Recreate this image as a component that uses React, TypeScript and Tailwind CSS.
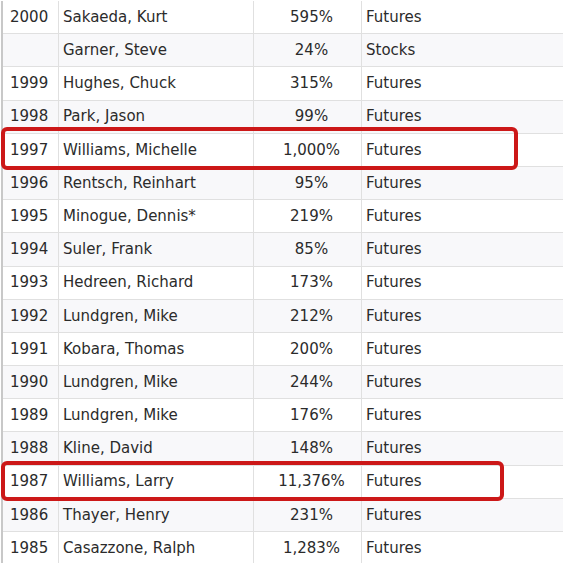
import React from "react";

const rows: [string, string, string, string][] = [
  ["2000", "Sakaeda, Kurt", "595%", "Futures"],
  ["", "Garner, Steve", "24%", "Stocks"],
  ["1999", "Hughes, Chuck", "315%", "Futures"],
  ["1998", "Park, Jason", "99%", "Futures"],
  ["1997", "Williams, Michelle", "1,000%", "Futures"],
  ["1996", "Rentsch, Reinhart", "95%", "Futures"],
  ["1995", "Minogue, Dennis*", "219%", "Futures"],
  ["1994", "Suler, Frank", "85%", "Futures"],
  ["1993", "Hedreen, Richard", "173%", "Futures"],
  ["1992", "Lundgren, Mike", "212%", "Futures"],
  ["1991", "Kobara, Thomas", "200%", "Futures"],
  ["1990", "Lundgren, Mike", "244%", "Futures"],
  ["1989", "Lundgren, Mike", "176%", "Futures"],
  ["1988", "Kline, David", "148%", "Futures"],
  ["1987", "Williams, Larry", "11,376%", "Futures"],
  ["1986", "Thayer, Henry", "231%", "Futures"],
  ["1985", "Casazzone, Ralph", "1,283%", "Futures"],
];

export default function App() {
  return (
    <div
      className="relative w-[563px] h-[563px] overflow-hidden bg-white text-[#2b2b2b] text-[15px]"
      style={{ fontFamily: "'DejaVu Sans', Verdana, sans-serif" }}
    >
      <div className="ml-[1px] mt-[1px] border-l-2 border-[#c8c8c8]">
        {rows.map((r, i) => (
          <div
            key={i}
            className={`flex h-[33.2px] items-center border-b border-[#e0e0e0] ${
              i % 2 === 1 ? "bg-[#f8f8fa]" : "bg-white"
            }`}
          >
            <div className="w-[56px] h-full flex items-center pl-[7px] border-r border-[#e0e0e0]">
              {r[0]}
            </div>
            <div className="w-[195px] h-full flex items-center pl-[4px] border-r border-[#e0e0e0]">
              {r[1]}
            </div>
            <div className="w-[108px] h-full flex items-center justify-center pl-[8px] border-r border-[#e0e0e0]">
              {r[2]}
            </div>
            <div className="flex-1 h-full flex items-center pl-[4px]">{r[3]}</div>
          </div>
        ))}
      </div>
      <div className="absolute left-[1px] top-[127px] w-[517px] h-[43px] border-[4px] border-[#cc1818] rounded-[6px]" />
      <div className="absolute left-[1px] top-[461px] w-[503px] h-[40px] border-[4px] border-[#cc1818] rounded-[6px]" />
    </div>
  );
}
